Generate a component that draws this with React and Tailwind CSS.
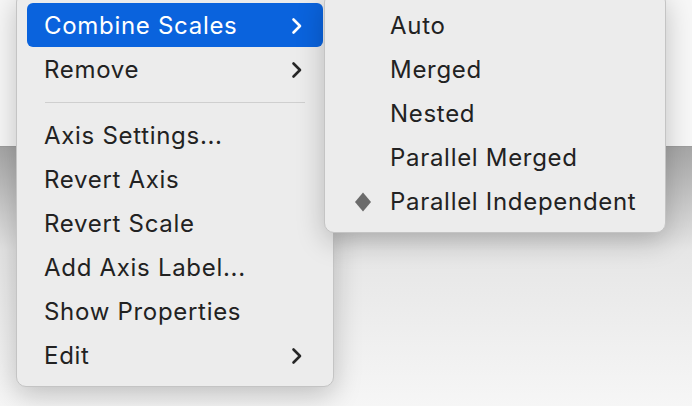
import React from "react";

const font = { fontFamily: "Inter, 'Liberation Sans', sans-serif" };

function Chevron({ white }) {
  return (
    <svg width="12" height="18" viewBox="0 0 12 18" className="shrink-0">
      <path
        d="M2.5 2.5 L9 9 L2.5 15.5"
        fill="none"
        stroke={white ? "#ffffff" : "#262626"}
        strokeWidth="2.6"
        strokeLinecap="round"
        strokeLinejoin="round"
      />
    </svg>
  );
}

function Item({ label, sub, active }) {
  return (
    <div
      className={
        "mx-[10px] h-[44px] flex items-center justify-between pt-[2px] pl-[17px] pr-[20px] rounded-[6px] " +
        (active ? "bg-[#0a63dd] text-white" : "text-[#222222]")
      }
    >
      <span>{label}</span>
      {sub && <Chevron white={active} />}
    </div>
  );
}

const mainItems = [
  { label: "Axis Settings..." },
  { label: "Revert Axis" },
  { label: "Revert Scale" },
  { label: "Add Axis Label..." },
  { label: "Show Properties" },
  { label: "Edit", sub: true },
];

const scaleItems = ["Auto", "Merged", "Nested", "Parallel Merged", "Parallel Independent"];

export default function App() {
  return (
    <div className="relative w-[692px] h-[406px] overflow-hidden bg-[#f7f7f7]" style={font}>
      <div className="h-[146px] bg-[#f7f7f7]" />
      <div className="h-[1px] bg-[#9e9e9e]" />
      <div className="h-[259px] bg-gradient-to-b from-[#a6a6a6] via-[#e6e6e6] via-40% to-[#f6f6f6]" />

      <div className="absolute left-[16px] top-[-8px] w-[318px] pt-[10px] pb-[9px] bg-[#ececec] rounded-[10px] border border-[#c4c4c4] shadow-[0_8px_28px_rgba(0,0,0,0.22)] text-[24px] tracking-[0.7px]">
        <Item label="Combine Scales" sub active />
        <Item label="Remove" sub />
        <div className="h-[22px] flex items-center px-[28px]">
          <div className="h-[1px] w-full bg-[#cfcfcf]" />
        </div>
        {mainItems.map((it) => (
          <Item key={it.label} label={it.label} sub={it.sub} />
        ))}
      </div>

      <div className="absolute left-[324px] top-[-8px] w-[342px] pt-[10px] pb-[9px] bg-[#ececec] rounded-[10px] border border-[#c4c4c4] shadow-[0_8px_28px_rgba(0,0,0,0.22)] text-[24px] tracking-[0.7px] text-[#222222]">
        {scaleItems.map((s, i) => (
          <div key={s} className="h-[44px] flex items-center pt-[2px]">
            <div className="w-[65px] flex justify-end pr-[18px]">
              {i === scaleItems.length - 1 && (
                <svg width="18" height="20" viewBox="0 0 18 20">
                  <path d="M9 0.5 L17 10 L9 19.5 L1 10 Z" fill="#6b6b6b" />
                </svg>
              )}
            </div>
            <span>{s}</span>
          </div>
        ))}
      </div>
    </div>
  );
}
